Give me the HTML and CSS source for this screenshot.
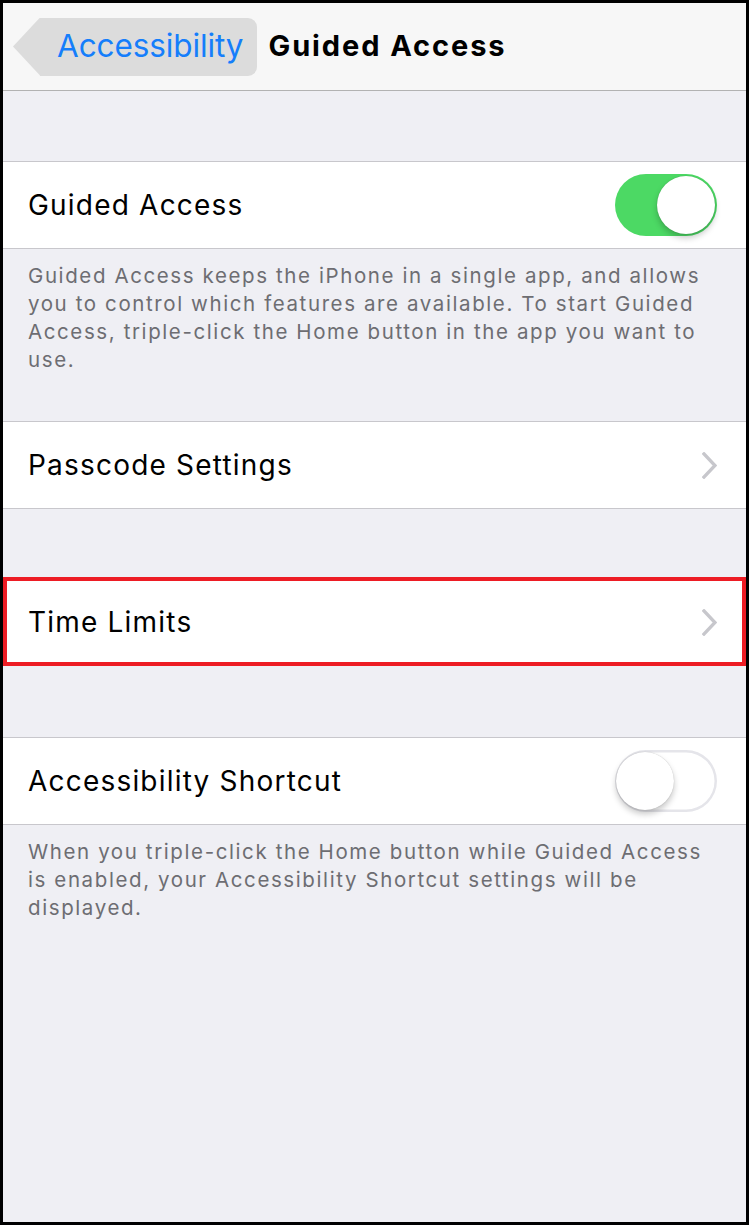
FILE: index.html
```html
<!DOCTYPE html>
<html lang="en">
<head>
<meta charset="utf-8">
<title>Guided Access</title>
<link rel="stylesheet" href="styles.css">
</head>
<body>
<div class="frame">
  <header class="navbar">
    <div class="back">
      <span class="back-tip"></span>
      <span class="back-label">Accessibility</span>
    </div>
    <h1 class="nav-title">Guided Access</h1>
  </header>

  <section class="group group-first">
    <div class="cell">
      <span class="cell-label">Guided Access</span>
      <span class="switch switch-on"><span class="knob"></span></span>
    </div>
  </section>
  <p class="footnote">Guided Access keeps the iPhone in a single app, and allows you to control which features are available. To start Guided Access, triple-click the Home button in the app you want to use.</p>

  <section class="group group-passcode">
    <div class="cell">
      <span class="cell-label">Passcode Settings</span>
      <svg class="chevron" width="15" height="27" viewBox="0 0 15 27"><polyline points="2,2 13,13.5 2,25" fill="none" stroke="#c7c7cc" stroke-width="3.4" stroke-linecap="square"/></svg>
    </div>
  </section>

  <section class="group group-time">
    <div class="cell cell-highlight">
      <span class="cell-label">Time Limits</span>
      <svg class="chevron" width="15" height="27" viewBox="0 0 15 27"><polyline points="2,2 13,13.5 2,25" fill="none" stroke="#c7c7cc" stroke-width="3.4" stroke-linecap="square"/></svg>
    </div>
  </section>

  <section class="group group-shortcut">
    <div class="cell">
      <span class="cell-label">Accessibility Shortcut</span>
      <span class="switch switch-off"><span class="knob"></span></span>
    </div>
  </section>
  <p class="footnote">When you triple-click the Home button while Guided Access is enabled, your Accessibility Shortcut settings will be displayed.</p>
</div>
</body>
</html>
```

FILE: styles.css
```css
* {
  box-sizing: border-box;
}

html, body {
  margin: 0;
  padding: 0;
}

body {
  font-family: Inter, "Liberation Sans", Arial, sans-serif;
  background: #ffffff;
}

.frame {
  width: 749px;
  height: 1225px;
  border: 3px solid #000;
  background: #efeff4;
  display: flex;
  flex-direction: column;
  overflow: hidden;
}

/* Navigation bar */
.navbar {
  height: 88px;
  flex: none;
  background: #f7f7f7;
  border-bottom: 1px solid #b2b2b2;
  display: flex;
  align-items: center;
  padding-left: 10px;
}

.back {
  display: flex;
  height: 58px;
}

.back-tip {
  width: 27px;
  height: 58px;
  background: #dcdcdc;
  clip-path: polygon(0 50%, 100% 0, 100% 100%);
}

.back-label {
  display: flex;
  align-items: center;
  background: #dcdcdc;
  border-radius: 0 9px 9px 0;
  padding: 0 14px 2px 17px;
  color: #157efb;
  font-size: 31.5px;
  letter-spacing: -0.1px;
}

.nav-title {
  margin: 0 0 2px 11px;
  font-size: 29px;
  font-weight: 700;
  letter-spacing: 1.9px;
  color: #000;
}

/* Grouped table */
.group {
  flex: none;
  background: #fff;
  border-top: 1px solid #c8c7cc;
  border-bottom: 1px solid #c8c7cc;
}

.group-first { margin-top: 70px; }
.group-passcode { margin-top: 47px; }
.group-time { margin-top: 69px; }
.group-shortcut { margin-top: 71px; }

.cell {
  position: relative;
  height: 86px;
  display: flex;
  align-items: center;
  justify-content: space-between;
  padding: 0 29px 0 25px;
}

.cell-label {
  font-size: 28px;
  letter-spacing: 1.2px;
  color: #000;
}

.chevron {
  display: block;
}

/* Red annotation frame drawn over the row */
.cell-highlight::after {
  content: "";
  position: absolute;
  left: 0;
  right: 0;
  top: -2px;
  bottom: -1px;
  border: 4px solid #ed1c24;
}

.footnote {
  margin: 0;
  padding: 13px 25px 0;
  font-size: 20.5px;
  letter-spacing: 1.6px;
  line-height: 28px;
  color: #6d6d72;
}

/* Switches */
.switch {
  position: relative;
  width: 102px;
  height: 62px;
  border-radius: 31px;
  flex: none;
}

.switch .knob {
  position: absolute;
  top: 2px;
  width: 58px;
  height: 58px;
  border-radius: 50%;
  background: #fff;
  box-shadow: 0 4px 6px rgba(0, 0, 0, 0.22), 0 0 1px rgba(0, 0, 0, 0.25);
}

.switch-on {
  background: #4cd964;
}

.switch-on .knob {
  right: 2px;
}

.switch-off {
  background: #fff;
  box-shadow: inset 0 0 0 2.5px #e5e5ea;
}

.switch-off .knob {
  left: 1px;
  top: 2px;
}
```
